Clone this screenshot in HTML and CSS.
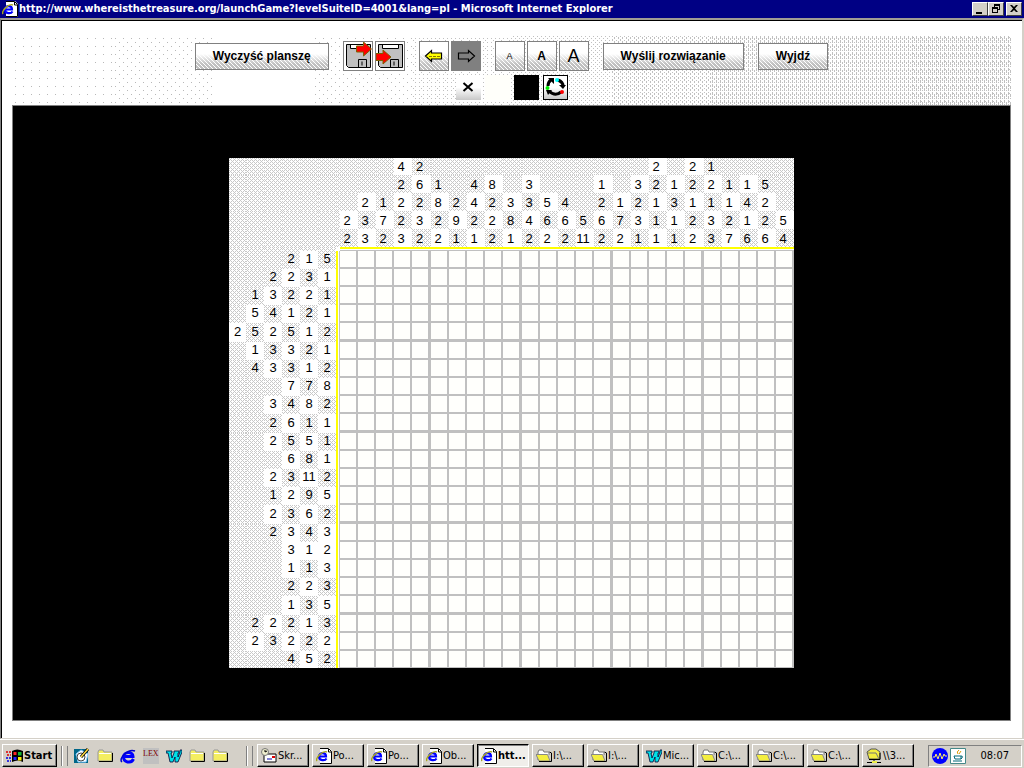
FILE: index.html
```html
<!DOCTYPE html>
<html lang="pl">
<head>
<meta charset="utf-8">
<title>whereisthetreasure.org</title>
<link rel="stylesheet" href="styles.css">
</head>
<body>
<svg class="sprite" aria-hidden="true">
  <symbol id="ie" viewBox="0 0 16 16">
    <path d="M4 0h9l3 3v13H4z" fill="#fff"/><path d="M4 .5h8.500l3 3v12H4M12.500 1v3h3" fill="none" stroke="#000"/>
    <path d="M10.500 10.500C9 13 3 13 3 8.500S10 4 10 8.500H4" fill="none" stroke="#00f" stroke-width="2.200"/>
    <path d="M1 13C-1 10 7 2 11 4" fill="none" stroke="#a8a820" stroke-width="1.400"/>
  </symbol>
  <symbol id="folder" viewBox="0 0 16 16">
    <path d="M1 4l1-2h4l1 2h8v9H1z" fill="#f4ee60" stroke="#999"/><path d="M2 5.500h12" stroke="#fff"/><path d="M2 13.500h13.500V5" fill="none" stroke="#000"/>
  </symbol>
  <symbol id="open" viewBox="0 0 16 16">
    <path d="M2 12V4l1-2h4l1 2h5v3" fill="#fff" stroke="#777"/><path d="M0 6.500h11.500L14 13H3z" fill="#f4ee40" stroke="#888"/><path d="M3 13.500h12.500V5l-2-1" fill="none" stroke="#000"/>
  </symbol>
  <symbol id="word" viewBox="0 0 16 16">
    <path d="M0 3h6v2H5l1 5 2-5V3h5v2h-1l0 4 2-5V2h2v2L12 14H9V9l-2 5H4L2 5H0z" fill="#00e0e8" stroke="#003" stroke-width=".8"/>
  </symbol>
  <symbol id="floppy" viewBox="0 0 28 28">
    <path d="M2.500 2.500h24v23h-22l-2-2z" fill="#c0c0c0" stroke="#000"/><path d="M6.500 3v3.500h16V3" fill="#fff" stroke="#000"/><path d="M14.500 25v-7.500h8V25M18 19.500v4" fill="none" stroke="#000"/>
  </symbol>
</svg>

<header class="titlebar">
  <svg class="icon"><use href="#ie"/></svg>
  <h1>http://www.whereisthetreasure.org/launchGame?levelSuiteID=4001&amp;lang=pl - Microsoft Internet Explorer</h1>
  <div class="window-buttons">
    <button type="button" aria-label="Minimize"><svg viewBox="0 0 12 10"><path d="M2 8h6v2H2z"/></svg></button>
    <button type="button" aria-label="Restore"><svg viewBox="0 0 12 10"><path d="M4 0h6v6H8V5h1V2H5v1H4zM2 3h6v6H2zm1 2v3h4V5z" fill-rule="evenodd"/></svg></button>
    <button type="button" class="close" aria-label="Close"><svg viewBox="0 0 12 10"><path d="M2 1h2l2 2 2-2h2L7 4.500 10 8H8L6 6 4 8H2l3-3.500z"/></svg></button>
  </div>
</header>

<main class="viewport">
  <div class="toolbar">
    <div class="shade" aria-hidden="true"><i class="d1"></i><i class="d2"></i><i></i><i class="d2"></i><i class="d4"></i><i class="d5"></i><i class="d6"></i><i class="d7"></i><i class="d7"></i><i class="d8"></i></div>
    <div class="tools">
      <button type="button" class="tool text">Wyczyść planszę</button>
      <div class="group">
        <button type="button" class="tool disk" aria-label="Zapisz">
          <svg viewBox="0 0 28 28"><use href="#floppy"/><path d="M12.500 4h7V0l8 7-8 7v-4h-7z" fill="#f00" stroke="#806000"/></svg>
        </button>
        <button type="button" class="tool disk" aria-label="Wczytaj">
          <svg viewBox="0 0 28 28"><use href="#floppy"/><path d="M0 11.500h7V8l8 7-8 7v-3.500H0z" fill="#f00" stroke="#806000"/></svg>
        </button>
      </div>
      <div class="group">
        <button type="button" class="tool" aria-label="Cofnij">
          <svg viewBox="0 0 28 28"><path d="M5.500 14l6-5.500V11h10v6h-10v2.500z" fill="#ff0" stroke="#000" stroke-width="1.200"/><path d="M9 14.500h11" stroke="#887800" stroke-dasharray="3 1"/></svg>
        </button>
        <button type="button" class="tool off" aria-label="Ponów">
          <svg viewBox="0 0 28 28"><path d="M22.500 14l-6-5.500V11h-10v6h10v2.500z" fill="none" stroke="#000" stroke-width="1.200"/></svg>
        </button>
      </div>
      <div class="group">
        <button type="button" class="tool small">A</button>
        <button type="button" class="tool medium">A</button>
        <button type="button" class="tool large">A</button>
      </div>
      <button type="button" class="tool text">Wyślij rozwiązanie</button>
      <button type="button" class="tool text">Wyjdź</button>
    </div>
    <div class="colors">
      <button type="button" class="color mark" aria-label="Krzyżyk"><svg viewBox="0 0 25 25"><path d="M7.500 8l9 8M16.500 8l-9 8" stroke="#000" stroke-width="2"/></svg></button>
      <button type="button" class="color blank" aria-label="Biały"></button>
      <button type="button" class="color black" aria-label="Czarny"></button>
      <button type="button" class="color cycle" aria-label="Zmień kolor">
        <svg viewBox="0 0 23 23"><g fill="none" stroke="#000" stroke-width="3"><path d="M4 10q0-4 3-6"/><path d="M14 4q5 2 5 6"/><path d="M17 16q-6 5-12-1"/></g><path d="M4 2h6v6zM15 9h7l-3 4zM2 14h6l-4 5z"/><circle cx="13" cy="4" r="2" fill="#0ff"/><circle cx="3.500" cy="12" r="2" fill="#0e0"/><circle cx="18" cy="16" r="2" fill="#f00"/></svg>
      </button>
    </div>
  </div>
  <section class="stage"><table class="puzzle" id="puzzle"></table></section>
</main>

<footer class="taskbar">
  <button type="button" class="start">
    <svg viewBox="0 0 18 16"><path d="M6 3q5-3 11 0v11q-5-3-11 0z" fill="#000"/><path d="M7.500 4h3v3h-3z" fill="#f22"/><path d="M12 4h3.500v3.500H12z" fill="#1b3"/><path d="M7.500 9h3v3h-3z" fill="#22f"/><path d="M12 9h3.500v3.500H12z" fill="#fe0"/><path d="M0 4h5M1 7h4" stroke="#d33" stroke-width="2" stroke-dasharray="2 1"/><path d="M0 10h5M1 13h4" stroke="#33d" stroke-width="2" stroke-dasharray="2 1"/></svg>Start</button>
  <span class="grip"></span>
  <nav class="quick">
    <svg viewBox="0 0 16 16"><path d="M0 1h14v14H0z" fill="#068"/><path d="M2 6l5-4 7 4-2 8H4z" fill="#fff" stroke="#8cf"/><circle cx="7" cy="9" r="4" fill="#fff" stroke="#444"/><path d="M7 9l7-8" stroke="#000" stroke-width="3"/><path d="M7 9l7-8" stroke="#fd4" stroke-width="1.500"/></svg>
    <svg><use href="#folder"/></svg>
    <svg viewBox="0 0 16 16"><path d="M13.500 11C11 16 3.500 14.500 3.500 9S13 3 13 8.500H5" fill="none" stroke="#00f" stroke-width="3"/><path d="M2 14C-2 11 8 0 15 3" fill="none" stroke="#00c" stroke-width="1.500"/></svg>
    <span class="lex">LEX</span>
    <svg><use href="#word"/></svg>
    <svg><use href="#folder"/></svg>
    <svg><use href="#folder"/></svg>
  </nav>
  <span class="grip"></span>
  <div class="tasks">
    <button type="button"><svg viewBox="0 0 16 16"><path d="M3 6h12v8H3z" fill="#fff" stroke="#000"/><circle cx="4" cy="4" r="3.500" fill="#eec" stroke="#777"/><path d="M4 2v2l2-1" fill="none" stroke="#000"/><path d="M11 8h3v2h-3z" fill="#d00"/><path d="M6 11h5" stroke="#00a"/></svg>Skr...</button>
    <button type="button"><svg><use href="#ie"/></svg>Po...</button>
    <button type="button"><svg><use href="#ie"/></svg>Po...</button>
    <button type="button"><svg><use href="#ie"/></svg>Ob...</button>
    <button type="button" class="active"><svg><use href="#ie"/></svg>htt...</button>
    <button type="button"><svg><use href="#open"/></svg>I:\...</button>
    <button type="button"><svg><use href="#open"/></svg>I:\...</button>
    <button type="button"><svg><use href="#word"/></svg>Mic...</button>
    <button type="button"><svg><use href="#open"/></svg>C:\...</button>
    <button type="button"><svg><use href="#open"/></svg>C:\...</button>
    <button type="button"><svg><use href="#open"/></svg>C:\...</button>
    <button type="button"><svg viewBox="0 0 16 16"><path d="M1 4l4-3h5l4 3v7H3z" fill="#f4ee40" stroke="#555"/><path d="M2 5h8l3 6" fill="none" stroke="#777"/><path d="M3 11.500h11V5" fill="none" stroke="#000"/><path d="M8 11v4M1 14.500h14" stroke="#000"/><path d="M6 13h5v2H6z" fill="#ee4"/></svg>\\3...</button>
  </div>
  <div class="tray">
    <svg viewBox="0 0 16 16"><circle cx="8" cy="8" r="8" fill="#00f"/><path d="M1 9h2l1-3 2 5 2-6 2 6 2-5 1 2h2" fill="none" stroke="#fe6"/></svg>
    <svg viewBox="0 0 16 16"><path d="M.5.500h15v15H.5z" fill="#fff" stroke="#488"/><path d="M4 8h7v3H5zM11 8q3 0 0 3M3 13h9" fill="none" stroke="#067"/><path d="M9 2q-3 2-1 4M11 3l-2 3" stroke="#d90" fill="none"/></svg>
    <time>08:07</time>
  </div>
</footer>
<script src="puzzle.js"></script>
</body>
</html>
```
FILE: styles.css
```css
* { box-sizing: border-box; }
body { margin: 0; min-height: 100vh; display: flex; flex-direction: column; background: #d4d0c8; color: #000; font: 11px/14px "DejaVu Sans Condensed", "DejaVu Sans", sans-serif; }
button { margin: 0; padding: 0; font: inherit; color: inherit; border-radius: 0; }
svg { display: block; }
.sprite { position: absolute; width: 0; height: 0; }

.titlebar { display: flex; align-items: center; height: 18px; padding: 0 2px; background: #000084; color: #fff; }
.titlebar .icon { width: 16px; height: 16px; flex: none; }
.titlebar h1 { flex: 1; min-width: 0; margin: 0 0 0 1px; overflow: hidden; white-space: nowrap; font: bold 11px/16px "DejaVu Sans Condensed", "DejaVu Sans", sans-serif; }
.window-buttons { display: flex; }
.window-buttons button { width: 16px; height: 14px; padding: 1px; background: #d4d0c8; border: 1px solid; border-color: #fff #404040 #404040 #fff; }
.window-buttons .close { margin-left: 2px; }
.window-buttons svg { width: 12px; height: 10px; }

.viewport { flex: 1; display: flex; flex-direction: column; padding: 16px 11px 17px; background: #fff; border: solid; border-width: 2px 2px 1px 1px; border-color: #a09c94 #d4d0c8 #d4d0c8 #808080; box-shadow: inset 1px 1px #000; }

.toolbar { position: relative; display: flex; flex-direction: column; align-items: center; gap: 4px; padding: 5px 0; }
.shade { position: absolute; inset: 0; display: grid; grid-template-columns: repeat(10, 1fr); }
.d1 { background: url("data:image/svg+xml,%3Csvg xmlns='http://www.w3.org/2000/svg' width='8' height='8' fill='%23b8b8b8'%3E%3Cpath d='M3 2h1v1H3z'/%3E%3C/svg%3E"); }
.d2 { background: url("data:image/svg+xml,%3Csvg xmlns='http://www.w3.org/2000/svg' width='8' height='8' fill='%23b8b8b8'%3E%3Cpath d='M3 2h1v1H3zM7 6h1v1H7z'/%3E%3C/svg%3E"); }
.d4 { background: url("data:image/svg+xml,%3Csvg xmlns='http://www.w3.org/2000/svg' width='8' height='8' fill='%23c0c0c0'%3E%3Cpath d='M3 2h1v1H3zM7 6h1v1H7zM7 2h1v1H7zM3 6h1v1H3zM1 4h1v1H1z'/%3E%3C/svg%3E"); }
.d5 { background: url("data:image/svg+xml,%3Csvg xmlns='http://www.w3.org/2000/svg' width='8' height='8' fill='%23c0c0c0'%3E%3Cpath d='M3 2h1v1H3zM7 6h1v1H7zM7 2h1v1H7zM3 6h1v1H3zM1 4h1v1H1zM5 0h1v1H5zM5 4h1v1H5zM1 0h1v1H1z'/%3E%3C/svg%3E"); }
.d6 { background: url("data:image/svg+xml,%3Csvg xmlns='http://www.w3.org/2000/svg' width='8' height='8' fill='%23c0c0c0'%3E%3Cpath d='M3 1h1v2H3zM7 5h1v2H7zM7 1h1v2H7zM3 5h1v2H3zM1 3h1v2H1zM5 0h1v1H5zM5 4h1v1H5zM1 0h1v1H1z'/%3E%3C/svg%3E"); }
.d7 { background: url("data:image/svg+xml,%3Csvg xmlns='http://www.w3.org/2000/svg' width='4' height='8' fill='%23c0c0c0'%3E%3Cpath d='M1 0h1v3H1zM3 2h1v2H3zM1 4h1v3H1zM3 6h1v1H3z'/%3E%3C/svg%3E"); }
.d8 { background: url("data:image/svg+xml,%3Csvg xmlns='http://www.w3.org/2000/svg' width='8' height='8' fill='%23c0c0c0'%3E%3Cpath d='M1 0h1v3H1zM3 2h1v3H3zM1 4h1v3H1zM3 6h1v1H3zM5 0h1v3H5zM7 2h1v3H7zM5 4h1v3H5zM7 6h1v1H7zM2 1h1v1H2z'/%3E%3C/svg%3E"); }
.tools { position: relative; display: flex; align-items: center; gap: 14px; }
.group { display: flex; gap: 2px; }
.tool { display: grid; place-items: center; width: 30px; height: 30px; border: 1px solid #808080; background: url("data:image/svg+xml,%3Csvg xmlns='http://www.w3.org/2000/svg' width='4' height='4' fill='%23fff'%3E%3Cpath d='M0 0h1v1H0zM1 1h1v1H1zM2 2h1v1H2zM3 3h1v1H3z'/%3E%3C/svg%3E"), linear-gradient(#fff 40%, #c0c0c0 80%); font-family: "Liberation Sans", Arial, sans-serif; }
.tool svg { width: 28px; height: 28px; }
.tool.text { width: auto; height: 27px; padding: 0 17px; font-size: 12px; font-weight: bold; white-space: nowrap; }
.tool.disk { background: #fff; }
.tool.off { background: #808080; }
.tool.small { font-size: 9px; }
.tool.medium { font-size: 12px; font-weight: bold; }
.tool.large { font-size: 18px; }
.colors { position: relative; display: flex; gap: 4px; }
.color { width: 25px; height: 25px; border: 0; background: #fff; }
.mark, .cycle { background: linear-gradient(#fff 50%, #c8c8c8); }
.blank { background: #fffffa; }
.black { background: #000; }
.cycle { border: 1px solid #000; }

.stage { flex: 1; display: grid; place-items: center; border: 1px solid #808080; background: #000; }

.puzzle { border-spacing: 0; table-layout: fixed; background: #fff; font: 13px/16px "Liberation Sans", Arial, sans-serif; }
.puzzle td, .puzzle th { width: 18px; height: 18px; padding: 0; font-weight: normal; text-align: center; white-space: nowrap; }
.puzzle .top { padding: 2px 4px 0 0; }
.puzzle .row { padding-bottom: 2px; }
.puzzle .dots { background: #fff url("data:image/svg+xml,%3Csvg xmlns='http://www.w3.org/2000/svg' width='4' height='4' fill='%23c8c8c8'%3E%3Cpath d='M0 0h1v1H0zM2 0h1v1H2zM1 1h1v1H1zM0 2h1v1H0zM2 2h1v1H2zM3 3h1v1H3z'/%3E%3C/svg%3E"); }
.puzzle tr > :first-child { width: 17px; }
.puzzle td { background: #fffffc; border: solid #c0c0c0; border-width: 0 2px 2px 0; }
.puzzle td.thick { width: 19px; border-right-width: 3px; }
.puzzle tr.thick > * { height: 19px; }
.puzzle tr.thick td { border-bottom-width: 3px; }
.puzzle tr:last-child td { border-bottom-width: 1px; }
.puzzle tr:first-child > *, .puzzle tr:last-child > * { height: 17px; }
.puzzle tr:first-child > .top { padding-top: 1px; }
.puzzle tr:last-child > .row { padding-bottom: 1px; }
.puzzle th.side { width: 4px; border-left: 2px solid #ff0; border-right: 1px solid #c0c0c0; }
.puzzle th.gap { width: 4px; }
.puzzle tr.rule > * { height: 4px; line-height: 0; }
.puzzle th.line { border-top: 2px solid #ff0; border-bottom: 1px solid #c0c0c0; }

.taskbar { display: flex; align-items: center; height: 29px; padding: 3px 2px 0; border-top: 1px solid #fff; gap: 4px; }
.taskbar svg { width: 16px; height: 16px; flex: none; }
.start, .tasks button { display: flex; align-items: center; height: 23px; background: #d4d0c8; border: 1px solid; border-color: #fff #000 #000 #fff; box-shadow: inset -1px -1px #808080; }
.start { width: 55px; padding-left: 3px; font-weight: bold; }
.taskbar .start svg { width: 18px; }
.grip { width: 7px; height: 20px; border-left: 1px solid #808080; box-shadow: inset 1px 0 #fff, inset -3px 0 #d4d0c8; border-right: 1px solid #808080; }
.quick { display: flex; gap: 7px; width: 170px; padding-left: 2px; }
.lex { width: 16px; height: 16px; background: #c0c0c0; color: #800000; font: 8px/12px "Liberation Serif", serif; }
.tasks { flex: 1; display: flex; gap: 3px; }
.tasks button { width: 52px; padding-left: 3px; gap: 1px; white-space: nowrap; overflow: hidden; }
.tasks .active { background: #f0eeea; border-color: #000 #fff #fff #000; box-shadow: inset 1px 1px #808080; font-weight: bold; }
.tray { display: flex; align-items: center; gap: 2px; width: 94px; height: 22px; padding: 0 12px 0 3px; border: 1px solid; border-color: #808080 #fff #fff #808080; }
.tray time { margin-left: auto; }
```
FILE: puzzle.js
```js
const columns = ["2 2", "2 3 3", "1 7 2", "4 2 2 2 3", "2 6 2 3 2", "1 8 2 2", "2 9 1", "4 4 2 1", "8 2 2 2", "3 8 1",
  "3 3 4 2", "5 6 2", "4 6 2", "5 11", "1 2 6 2", "1 7 2", "3 2 3 1", "2 2 1 1 1", "1 3 1 1", "2 2 1 2 2",
  "1 2 1 3 3", "1 1 2 7", "1 4 1 6", "5 2 2 6", "5 4"].map(s => s.split(" "));
const rows = ["2 1 5", "2 2 3 1", "1 3 2 2 1", "5 4 1 2 1", "2 5 2 5 1 2", "1 3 3 2 1", "4 3 3 1 2", "7 7 8", "3 4 8 2",
  "2 6 1 1", "2 5 5 1", "6 8 1", "2 3 11 2", "1 2 9 5", "2 3 6 2", "2 3 4 3", "3 1 2", "1 1 3", "2 2 3", "1 3 5",
  "2 2 2 1 3", "2 3 2 2 2", "4 5 2"].map(s => s.split(" "));
const depth = 5, span = 6;
const table = document.getElementById("puzzle");

function add(tr, tag, cls, text) {
  const cell = document.createElement(tag);
  if (cls) cell.className = cls;
  if (text) cell.textContent = text;
  tr.append(cell);
}
const isFifth = i => i % 5 === 4;

for (let r = 0; r < depth; r++) {
  const tr = table.insertRow();
  for (let c = 0; c < span; c++) add(tr, "th", "dots");
  add(tr, "th", "gap dots");
  columns.forEach((clues, c) => {
    const fromBottom = depth - 1 - r;
    const text = clues[clues.length - 1 - fromBottom];
    add(tr, "th", !text || (c + fromBottom) % 2 === 0 ? "top dots" : "top", text);
  });
}

const rule = table.insertRow();
rule.className = "rule";
for (let c = 0; c < span; c++) add(rule, "th", "dots");
add(rule, "th", "gap");
columns.forEach(() => add(rule, "th", "line"));

rows.forEach((clues, r) => {
  const tr = table.insertRow();
  if (isFifth(r)) tr.className = "thick";
  for (let c = 0; c < span; c++) {
    const fromRight = span - 1 - c;
    const text = clues[clues.length - 1 - fromRight];
    add(tr, "th", !text || ((r + fromRight) % 2 === 0 && r !== 16) ? "row dots" : "row", text);
  }
  add(tr, "th", "side");
  columns.forEach((_, c) => add(tr, "td", isFifth(c) && c < 24 ? "thick" : ""));
});
```
